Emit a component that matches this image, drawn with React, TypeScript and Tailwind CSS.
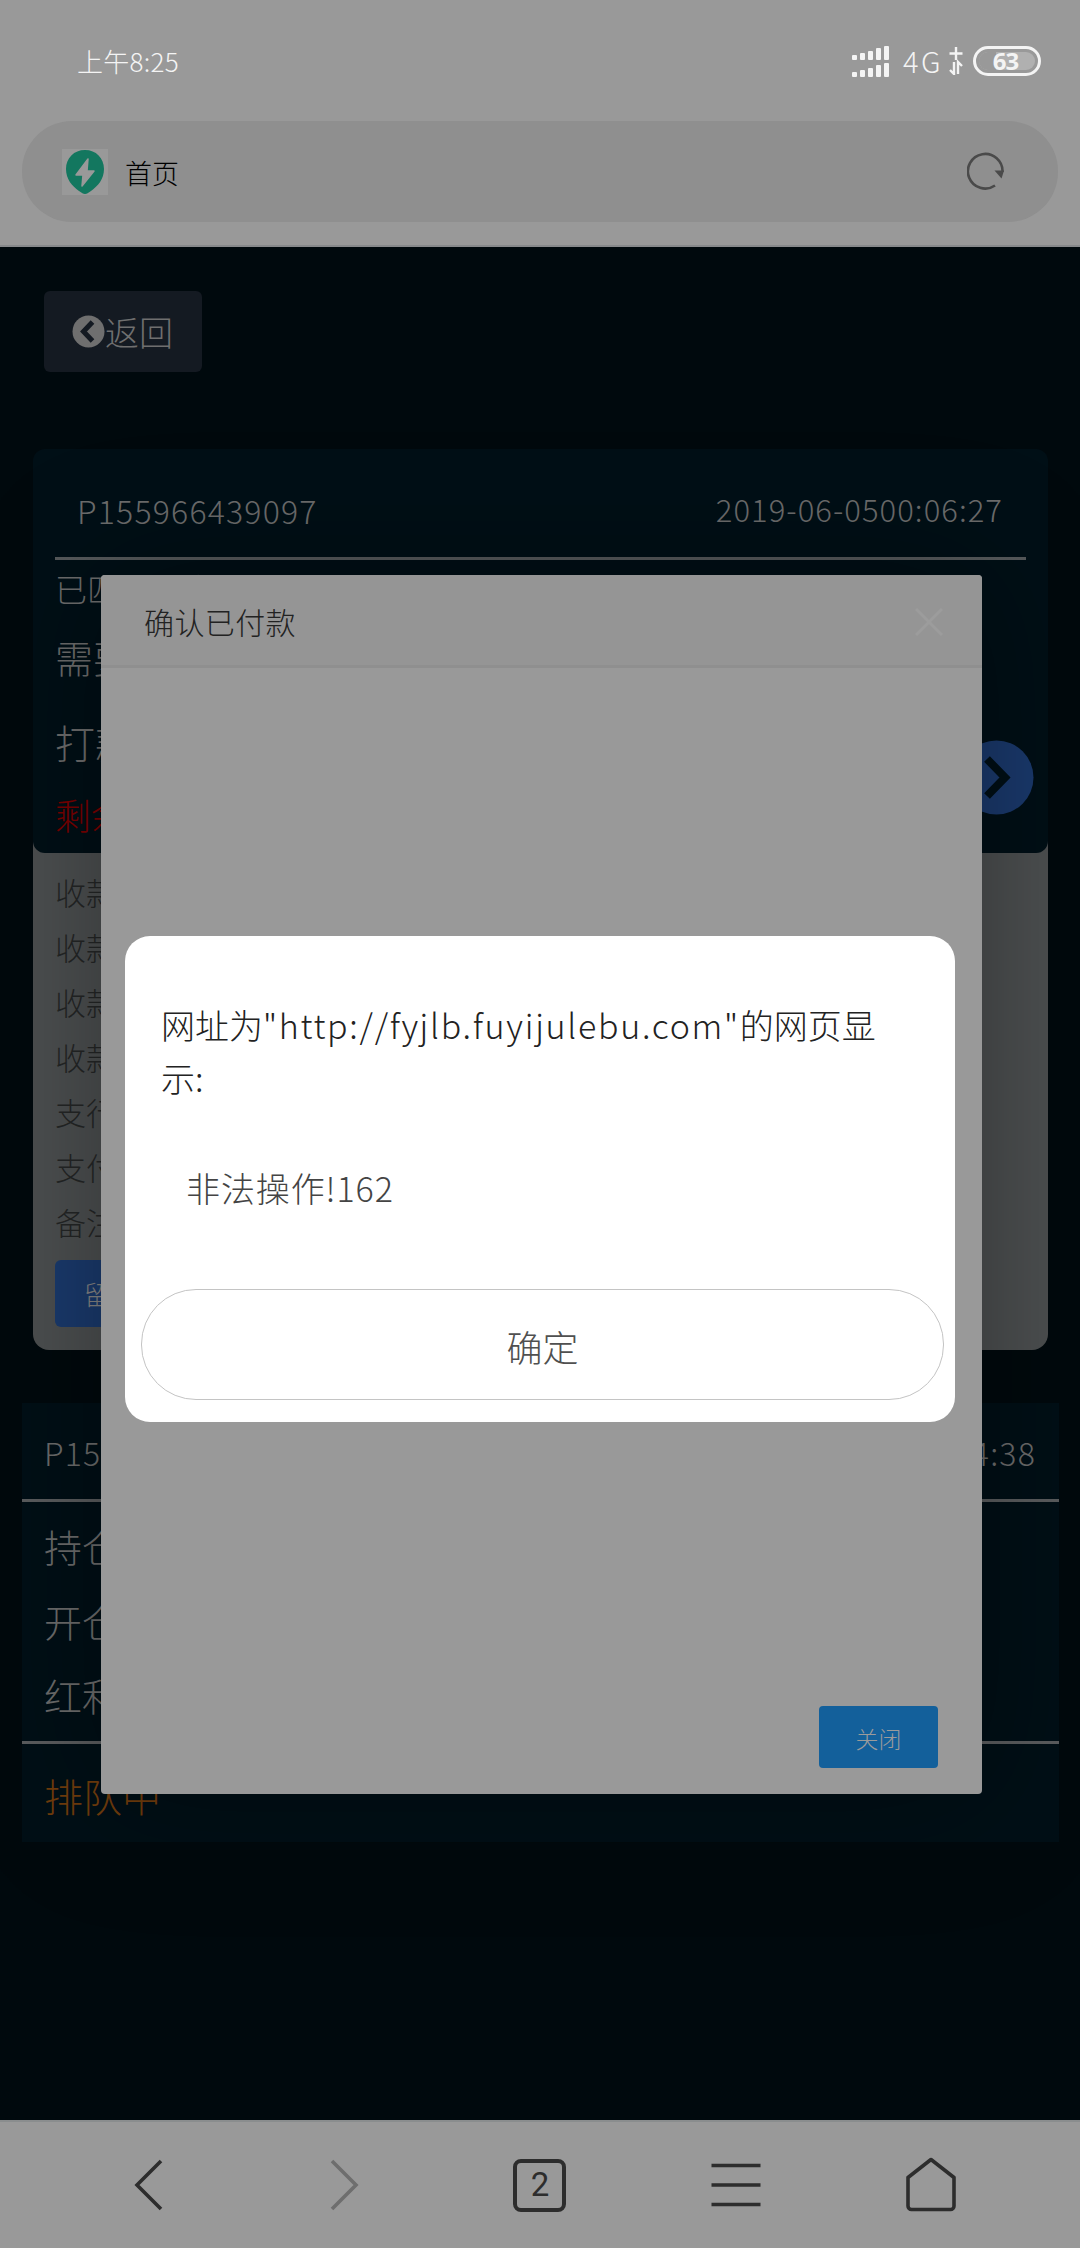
import React from "react";

const paymentRows = ["收款人", "收款行", "收款号", "收款码", "支行名", "支付宝", "备注"];
const bars = ["h-[5px]", "h-[7px]", "h-[9px]", "h-[12px]", "h-[14px]"];

function SignalBars() {
  return (
    <div className="flex h-[14px] items-end gap-[3px]">
      {bars.map((h) => (
        <span key={h} className={`w-[5px] rounded-[1px] bg-[#f4f4f4] ${h}`} />
      ))}
    </div>
  );
}

function StatusBar() {
  return (
    <div className="flex h-[121px] items-start justify-between pl-[77px] pr-[39px] text-[#f4f4f4]">
      <span className="mt-[41px] text-[26px] leading-[40px] tracking-[0.3px]">上午8:25</span>
      <div className="mt-[46px] flex items-start">
        <div className="flex flex-col gap-[3px]">
          <SignalBars />
          <SignalBars />
        </div>
        <span className="ml-[14px] mt-[-1px] w-[46px] text-[29px] leading-[30px] tracking-[2.5px]">4G</span>
        <svg className="mr-[10px] mt-[1px]" width="14" height="28" viewBox="0 0 14 28" fill="none" stroke="#f4f4f4" strokeWidth="2.4">
          <path d="M7 0v13M0.5 6.5h13M5 15v12L1 23M9 27V15l4 4" />
        </svg>
        <div className="relative flex h-[30px] w-[68px] items-center justify-center rounded-full border-[3px] border-[#f4f4f4] p-[3px]">
          <span className="absolute left-[3px] top-[3px] h-[18px] w-[56px] rounded-full bg-[#b0b0b0]" />
          <span className="absolute left-[3px] top-[3px] h-[18px] w-[17px] rounded-l-full bg-[#999]" />
          <span className="relative mr-[3px] font-['Noto_Sans','Liberation_Sans',sans-serif] text-[24px] font-bold leading-[24px] tracking-[-1px]">63</span>
        </div>
      </div>
    </div>
  );
}

function AddressBar() {
  return (
    <div className="mx-[22px] flex h-[101px] items-center rounded-[50px] bg-[#8f8f8f] pl-[40px] pr-[53px]">
      <svg width="46" height="46" viewBox="0 0 46 46">
        <path d="M0 0h46v46H0z" fill="#999" />
        <path d="M23 1C12 1 4 9 4 20c0 10 6 17 13 22 3 2 4 3 6 3s3-1 6-3c7-5 13-12 13-22C42 9 34 1 23 1z" fill="#13775f" />
        <path d="M26 10L14 26h7l-1 11 12-15h-7z" fill="#999" stroke="#999" strokeWidth="1.5" strokeLinejoin="round" />
      </svg>
      <span className="ml-[17px] mt-[3px] flex-1 text-[27px] text-black">首页</span>
      <svg className="mb-[3px]" width="38" height="40" viewBox="0 0 38 40" fill="none">
        <path d="M28 35.5A17.3 17.3 0 1 1 35.5 22" stroke="#4a4a4a" strokeWidth="2.6" />
        <path d="M27.5 20.5h9.5l-2.5 8z" fill="#4a4a4a" />
      </svg>
    </div>
  );
}

function OrderCard() {
  return (
    <section className="mx-[32px] ml-[33px] mt-[77px] h-[901px] rounded-[16px] bg-[#4c4f50]">
      <div className="h-[404px] rounded-[12px] bg-[#000f16] px-[22px]">
        <div className="flex h-[111px] items-center justify-between border-b-[3px] border-[#56595b] pb-[3px] pl-[22px] pr-[23px] pt-[16px] text-[#6c6c6c]">
          <span className="text-[32px] tracking-[1.2px]">P155966439097</span>
          <span className="text-[31px] tracking-[1.05px]">2019-06-0500:06:27</span>
        </div>
        <div className="flex justify-between">
          <div className="whitespace-nowrap text-[#6c6c6c]">
            <p className="h-[54px] text-[32px] leading-[56px]">已匹配卖家</p>
            <p className="h-[86px] text-[38px] leading-[86px]">需要</p>
            <p className="h-[84px] text-[40px] leading-[84px]">打款</p>
            <p className="h-[60px] text-[36px] leading-[60px] text-[#7a0000]">剩余</p>
          </div>
          <svg className="mr-[-8px] mt-[180px]" width="75" height="75" viewBox="0 0 75 75" fill="none">
            <circle cx="37.5" cy="37.5" r="37" fill="#1a396c" />
            <path d="M28 19l18 18.5L28 56" stroke="#000f16" strokeWidth="8" />
          </svg>
        </div>
      </div>
      <div className="px-[22px] pt-[11px] text-[31px] text-[#242626]">
        {paymentRows.map((row) => (
          <p key={row} className="h-[55px] leading-[55px]">{row}</p>
        ))}
        <button className="mt-[11px] flex h-[67px] w-[160px] items-center rounded-[6px] bg-[#1a3a6d] pl-[29px] text-[26px] text-[#858585]">留言</button>
      </div>
    </section>
  );
}

function QueueCard() {
  return (
    <section className="mx-[21px] ml-[22px] mt-[53px] h-[439px] bg-[#000f16] text-[#6c6c6c]">
      <div className="flex h-[99px] items-center justify-between border-b-[3px] border-[#5a5c5e] pl-[22px] pr-[23px] pt-[2px] text-[32px] tracking-[1.2px]">
        <span>P155966439104</span>
        <span>2019-06-0500:14:38</span>
      </div>
      <div className="h-[242px] border-b-[3px] border-[#5a5c5e] pl-[22px] pt-[7px] text-[38px] leading-[74.5px]">
        <p>持仓</p>
        <p>开仓</p>
        <p>红利</p>
      </div>
      <p className="pl-[22px] text-[39px] leading-[103px] text-[#703c0c]">排队中</p>
    </section>
  );
}

function BottomNav() {
  return (
    <nav className="flex h-[128px] items-center border-t-2 border-[#8a8d8e] bg-[#999] px-[51px]">
      <div className="grid w-full grid-cols-5 place-items-center">
        <svg width="60" height="60" viewBox="0 0 60 60" fill="none" stroke="#2d2d2d" strokeWidth="3.6">
          <path d="M42 6L18 30l24 24" />
        </svg>
        <svg width="60" height="60" viewBox="0 0 60 60" fill="none" stroke="#6e6e6e" strokeWidth="3.6">
          <path d="M18 6l24 24-24 24" />
        </svg>
        <div className="flex h-[53px] w-[53px] items-center justify-center rounded-[8px] border-[4px] border-[#2d2d2d] font-[Roboto,sans-serif] text-[33px] font-normal text-[#2d2d2d]">2</div>
        <svg width="60" height="60" viewBox="0 0 60 60" stroke="#2d2d2d" strokeWidth="3.6">
          <path d="M5.5 10.5h49M5.5 30h49M5.5 49.5h49" />
        </svg>
        <svg width="60" height="60" viewBox="0 0 60 60" fill="none" stroke="#2d2d2d" strokeWidth="3.6" strokeLinejoin="round">
          <path d="M30 4.5L53 22.5V51a3.5 3.5 0 0 1-3.5 3.5h-39A3.5 3.5 0 0 1 7 51V22.5z" />
        </svg>
      </div>
    </nav>
  );
}

function ConfirmModal() {
  return (
    <div className="absolute left-[101px] top-[575px] flex h-[1219px] w-[881px] flex-col rounded-[4px] bg-[#999] shadow-[0_0_130px_rgba(0,0,0,0.35)]">
      <header className="flex h-[93px] items-center justify-between rounded-t-[4px] border-b-[3px] border-[#8f8f8f] bg-[#959595] pl-[43px] pr-[39px]">
        <h2 className="mt-[2px] text-[30px] tracking-[0.4px] text-[#222]">确认已付款</h2>
        <svg className="mt-[3px]" width="28" height="28" viewBox="0 0 28 28" stroke="#9c9c9c" strokeWidth="3">
          <path d="M1 1l26 26M27 1L1 27" />
        </svg>
      </header>
      <div className="flex flex-1 items-end justify-end pb-[26px] pr-[44px]">
        <button className="h-[62px] w-[119px] rounded-[4px] bg-[#13609b] pt-[2px] text-[23px] text-[#9b9b9b]">关闭</button>
      </div>
    </div>
  );
}

function AlertDialog() {
  return (
    <div className="absolute left-[125px] top-[936px] flex h-[486px] w-[830px] flex-col rounded-[25px] bg-white pl-[16px] pr-[11px] pt-[62px]">
      <div className="h-[106px] whitespace-nowrap pl-[20px] text-[34px] leading-[53px] text-[#222]">
        <p>网址为<span className="tracking-[1.7px]">"http://fyjlb.fuyijulebu.com"</span>的网页显</p>
        <p>示:</p>
      </div>
      <p className="mt-[54px] pl-[45px] text-[34px] leading-[60px] tracking-[0.9px] text-[#444]">非法操作!162</p>
      <button className="mt-auto mb-[22px] h-[111px] w-full rounded-[55px] border border-[#c4c4c4] pt-[2px] text-[36px] text-[#505050]">确定</button>
    </div>
  );
}

export default function App() {
  return (
    <div className="relative flex h-[2248px] w-[1080px] flex-col overflow-hidden bg-[#00090d] font-['Noto_Sans_CJK_SC',sans-serif] font-light">
      <header className="h-[247px] shrink-0 border-b-2 border-[#87898b] bg-[#999]">
        <StatusBar />
        <AddressBar />
      </header>
      <main className="flex-1">
        <button className="ml-[44px] mt-[44px] flex h-[81px] w-[158px] items-center rounded-[6px] bg-[#141a22] pl-[28px] text-[34px] text-[#6f6f6f]">
          <svg className="shrink-0" width="33" height="33" viewBox="0 0 33 33" fill="none">
            <circle cx="16.5" cy="16.5" r="16" fill="#6f6f6f" />
            <path d="M20.5 7l-9 9.5 9 9.5" stroke="#141a22" strokeWidth="5" />
          </svg>
          <span className="whitespace-nowrap">返回</span>
        </button>
        <OrderCard />
        <QueueCard />
      </main>
      <BottomNav />
      <ConfirmModal />
      <AlertDialog />
    </div>
  );
}
